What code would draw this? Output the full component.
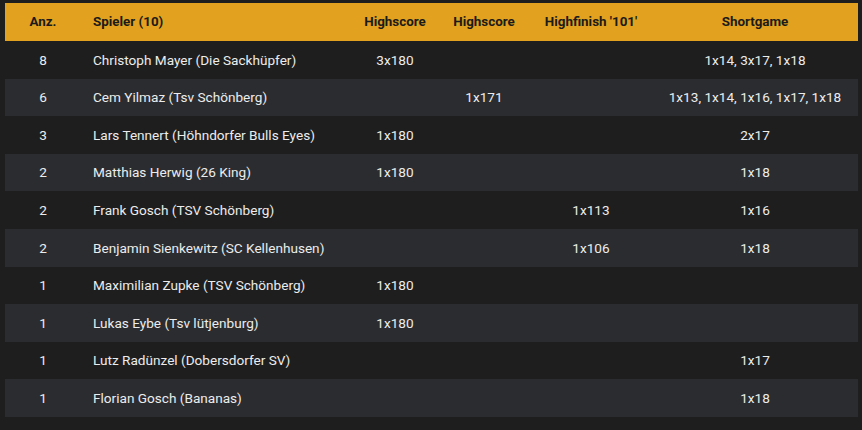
import React from 'react';

const rows = [
  { n: 8, name: "Christoph Mayer (Die Sackhüpfer)", hs1: "3x180", hs2: "", hf: "", sg: "1x14, 3x17, 1x18" },
  { n: 6, name: "Cem Yilmaz (Tsv Schönberg)", hs1: "", hs2: "1x171", hf: "", sg: "1x13, 1x14, 1x16, 1x17, 1x18" },
  { n: 3, name: "Lars Tennert (Höhndorfer Bulls Eyes)", hs1: "1x180", hs2: "", hf: "", sg: "2x17" },
  { n: 2, name: "Matthias Herwig (26 King)", hs1: "1x180", hs2: "", hf: "", sg: "1x18" },
  { n: 2, name: "Frank Gosch (TSV Schönberg)", hs1: "", hs2: "", hf: "1x113", sg: "1x16" },
  { n: 2, name: "Benjamin Sienkewitz (SC Kellenhusen)", hs1: "", hs2: "", hf: "1x106", sg: "1x18" },
  { n: 1, name: "Maximilian Zupke (TSV Schönberg)", hs1: "1x180", hs2: "", hf: "", sg: "" },
  { n: 1, name: "Lukas Eybe (Tsv lütjenburg)", hs1: "1x180", hs2: "", hf: "", sg: "" },
  { n: 1, name: "Lutz Radünzel (Dobersdorfer SV)", hs1: "", hs2: "", hf: "", sg: "1x17" },
  { n: 1, name: "Florian Gosch (Bananas)", hs1: "", hs2: "", hf: "", sg: "1x18" },
];

const cols = "grid grid-cols-[76px_271px_86px_92px_122px_1fr] items-center";

const App = () => {
  return (
    <div className="w-[862px] h-[430px] bg-[#1e1e1e] pt-[3px] pl-[5px] pr-[4px] font-['Roboto',sans-serif] text-[13.6px]">
      <div className={`${cols} h-[38px] bg-[#e2a11e] text-[#1b1b1b] font-bold text-[13.4px]`}>
        <div className="text-center">Anz.</div>
        <div className="pl-[12px]">Spieler (10)</div>
        <div className="text-center">Highscore</div>
        <div className="text-center">Highscore</div>
        <div className="text-center">Highfinish '101'</div>
        <div className="text-center">Shortgame</div>
      </div>

      {rows.map((r, i) => (
        <div
          key={i}
          className={`${cols} h-[37.6px] text-[#ececec] ${i % 2 === 1 ? 'bg-[#2b2c30]' : 'bg-[#1e1e1e]'}`}
        >
          <div className="text-center">{r.n}</div>
          <div className="pl-[12px] whitespace-nowrap">{r.name}</div>
          <div className="text-center">{r.hs1}</div>
          <div className="text-center">{r.hs2}</div>
          <div className="text-center">{r.hf}</div>
          <div className="text-center whitespace-nowrap">{r.sg}</div>
        </div>
      ))}
    </div>
  );
};

export default App;
